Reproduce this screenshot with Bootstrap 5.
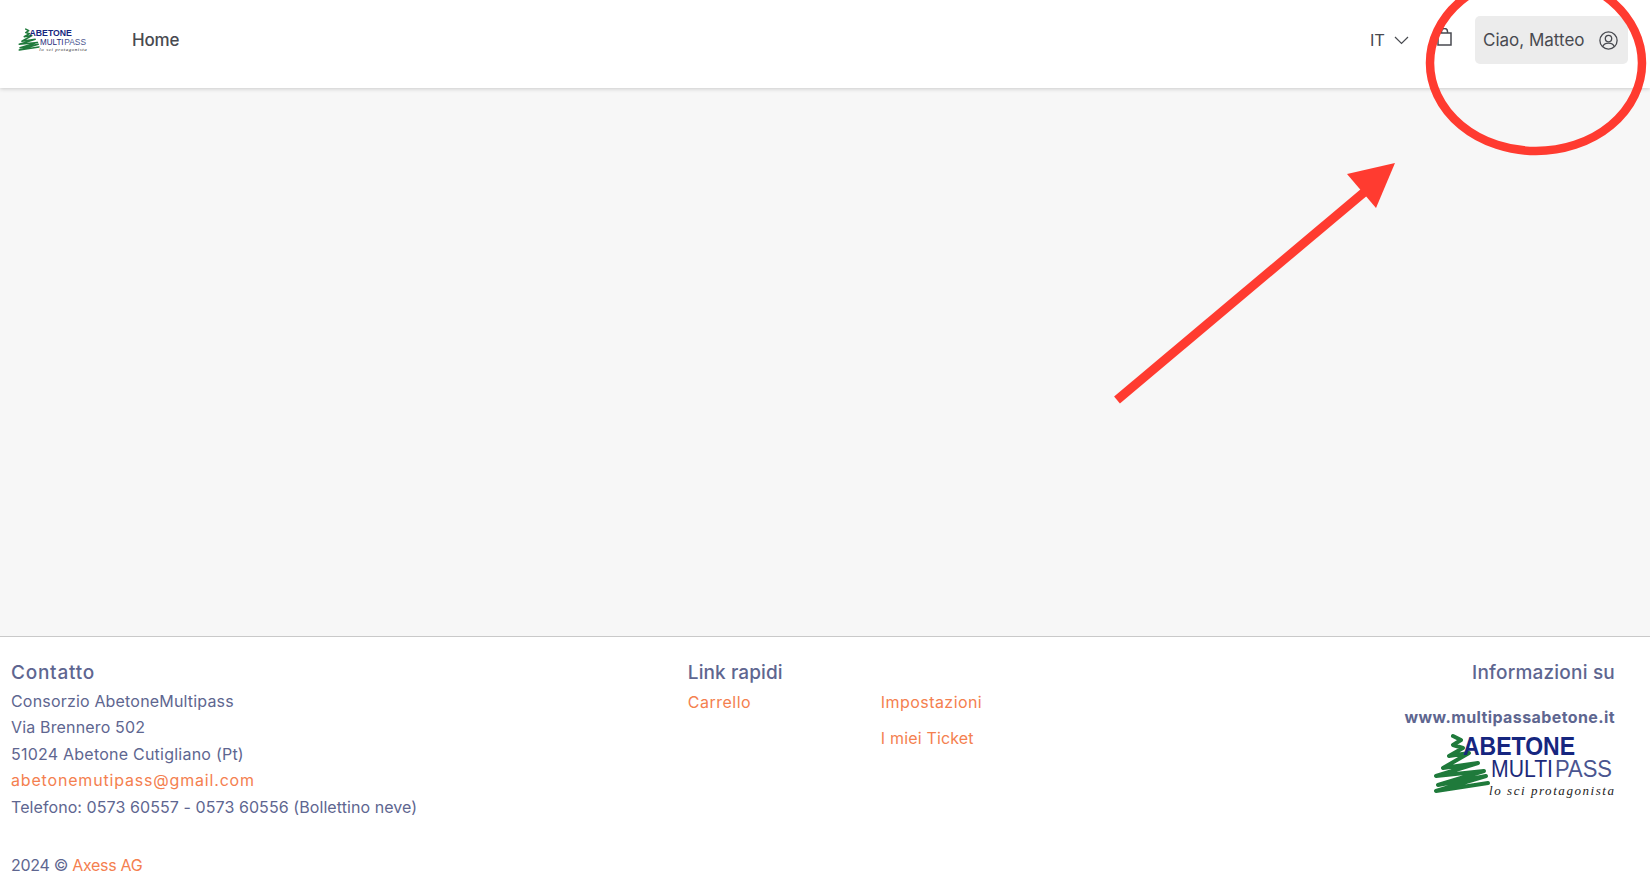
<!DOCTYPE html>
<html lang="it">
<head>
<meta charset="utf-8">
<title>Abetone Multipass</title>
<link href="https://cdn.jsdelivr.net/npm/bootstrap@5.3.0/dist/css/bootstrap.min.css" rel="stylesheet">
<style>
body{font-family:Inter,"Liberation Sans",sans-serif;background:#f7f7f7;color:#484a50;overflow:hidden;position:relative;height:877px}
.topbar{height:88px;background:#fff;box-shadow:0 1px 4px rgba(0,0,0,.18);padding:0 22px 8px 18px;position:relative}
.brandlogo{width:70px;height:25px;display:block}
.navhome{margin-left:44px;font-size:17px;font-weight:500;color:#484a50;text-decoration:none;letter-spacing:-.2px;padding-top:1px}
.lang{font-size:16.5px;color:#484a50;margin-right:13px;padding-top:1px}
.langcode{margin-right:9px}
.bagicon{margin:-6px 17px 0 15px}
.userbtn{width:153px;height:48px;background:#ececec;border-radius:5px;font-size:17px;color:#484a50;padding:1px 10px 0 8px;margin-left:6px}
.pagemain{height:548px}
.pagefoot{height:241px;background:#fff;border-top:1px solid #c9c9c9;padding:0 17px 0 11px;color:#5e6690;font-size:16px;line-height:26.4px;position:relative}
.foothead{font-size:19px;font-weight:500;line-height:26px;margin:23px 0 2px;color:#5e6690}
.heada{letter-spacing:.75px}
.headb{letter-spacing:.1px;margin-left:1px}
.headc{letter-spacing:.2px}
.orlink{color:#f4804f;text-decoration:none}
.ls1{letter-spacing:.18px}
.ls2{letter-spacing:.16px}
.ls3{letter-spacing:.23px}
.ls4{letter-spacing:.82px}
.ls5{letter-spacing:.08px}
.ls6{letter-spacing:-.3px}
.ql1{letter-spacing:.5px}
.ql2{letter-spacing:.44px}
.ql3{letter-spacing:.17px}
.quick{width:193px;margin-left:1px}
.quickitem{margin-bottom:9px;padding-top:1px}
.copyline{margin-top:32px}
.infocol{padding-right:18px}
.siteurl{font-weight:700;color:#5e6690;margin-top:18px;font-size:16px;letter-spacing:.4px}
.footlogo{width:184px;height:66px;display:block;margin:3px -2px 0 auto}
.annot{position:absolute;left:0;top:0;width:1650px;height:877px;pointer-events:none}
</style>
</head>
<body>
<nav class="topbar d-flex align-items-center">
  <a href="#" class="d-block">
    <svg class="brandlogo" viewBox="0 0 184 66" role="img" aria-label="Abetone Multipass">
      <path d="M20 3L28 7L20 12L30 15L16 23L36 20L10 35L45 30L3 43L51 38L5 52L53 43L3 58L55 50" fill="none" stroke="#1f7a3b" stroke-width="4" stroke-linecap="round" stroke-linejoin="round"/>
      <text x="30" y="22" font-family="Liberation Sans,sans-serif" font-size="25" font-weight="700" fill="#16267f" textLength="112" lengthAdjust="spacingAndGlyphs">ABETONE</text>
      <text x="58" y="44" font-family="Liberation Sans,sans-serif" font-size="24" fill="#1d2a7a" textLength="62" lengthAdjust="spacingAndGlyphs">MULTI</text>
      <text x="122" y="44" font-family="Liberation Sans,sans-serif" font-size="24" fill="#4a5590" textLength="57" lengthAdjust="spacingAndGlyphs">PASS</text>
      <text x="56" y="62" font-family="Liberation Serif,serif" font-style="italic" font-size="13" fill="#222" textLength="125" lengthAdjust="spacing">lo sci protagonista</text>
    </svg>
  </a>
  <a href="#" class="navhome">Home</a>
  <div class="ms-auto d-flex align-items-center">
    <span class="lang d-flex align-items-center">
      <span class="langcode">IT</span>
      <svg width="15" height="9" viewBox="0 0 15 9" fill="none" stroke="#484a50" stroke-width="1.2"><path d="M1 1l6.500 6.500L14 1"/></svg>
    </span>
    <svg class="bagicon" width="15" height="18" viewBox="0 0 15 18" fill="none" stroke="#484a50" stroke-width="1.500"><path d="M1 5h13v12H1z"/><path d="M4.500 5V3.500a3 3 0 0 1 6 0V5"/></svg>
    <div class="userbtn d-flex align-items-center justify-content-between">
      <span>Ciao, Matteo</span>
      <svg width="19" height="19" viewBox="0 0 19 19" fill="none" stroke="#484a50" stroke-width="1.300"><circle cx="9.500" cy="9.500" r="8.600"/><circle cx="9.500" cy="7.600" r="3.200"/><path d="M3.800 15.600c.8-2.600 3-3.500 5.700-3.500s4.900.9 5.700 3.500"/></svg>
    </div>
  </div>
</nav>
<main class="pagemain"></main>
<footer class="pagefoot">
  <div class="row g-0">
    <div class="col-5">
      <div class="foothead heada">Contatto</div>
      <div class="ls1">Consorzio AbetoneMultipass</div>
      <div class="ls2">Via Brennero 502</div>
      <div class="ls3">51024 Abetone Cutigliano (Pt)</div>
      <div class="ls4"><a href="#" class="orlink">abetonemutipass@gmail.com</a></div>
      <div class="ls5">Telefono: 0573 60557 - 0573 60556 (Bollettino neve)</div>
      <div class="copyline ls6">2024 © <a href="#" class="orlink">Axess AG</a></div>
    </div>
    <div class="col-4">
      <div class="foothead headb">Link rapidi</div>
      <div class="d-flex">
        <div class="quick"><div class="quickitem"><a href="#" class="orlink ql1">Carrello</a></div></div>
        <div>
          <div class="quickitem"><a href="#" class="orlink ql2">Impostazioni</a></div>
          <div class="quickitem"><a href="#" class="orlink ql3">I miei Ticket</a></div>
        </div>
      </div>
    </div>
    <div class="col-3 text-end infocol">
      <div class="foothead headc">Informazioni su</div>
      <div class="siteurl">www.multipassabetone.it</div>
      <svg class="footlogo" viewBox="0 0 184 66" role="img" aria-label="Abetone Multipass">
        <path d="M20 3L28 7L20 12L30 15L16 23L36 20L10 35L45 30L3 43L51 38L5 52L53 43L3 58L55 50" fill="none" stroke="#1f7a3b" stroke-width="4" stroke-linecap="round" stroke-linejoin="round"/>
        <text x="30" y="22" font-family="Liberation Sans,sans-serif" font-size="25" font-weight="700" fill="#16267f" textLength="112" lengthAdjust="spacingAndGlyphs">ABETONE</text>
        <text x="58" y="44" font-family="Liberation Sans,sans-serif" font-size="24" fill="#1d2a7a" textLength="62" lengthAdjust="spacingAndGlyphs">MULTI</text>
        <text x="122" y="44" font-family="Liberation Sans,sans-serif" font-size="24" fill="#4a5590" textLength="57" lengthAdjust="spacingAndGlyphs">PASS</text>
        <text x="56" y="62" font-family="Liberation Serif,serif" font-style="italic" font-size="13" fill="#222" textLength="125" lengthAdjust="spacing">lo sci protagonista</text>
      </svg>
    </div>
  </div>
</footer>
<svg class="annot" viewBox="0 0 1650 877">
  <ellipse cx="1536" cy="63" rx="106" ry="88" fill="none" stroke="#ff3b30" stroke-width="8.500"/>
  <path d="M1117 400L1368 189" stroke="#ff3b30" stroke-width="9" fill="none"/>
  <path d="M1395 163L1347 174L1376 208Z" fill="#ff3b30"/>
</svg>
<script src="https://cdn.jsdelivr.net/npm/bootstrap@5.3.0/dist/js/bootstrap.bundle.min.js"></script>
</body>
</html>
